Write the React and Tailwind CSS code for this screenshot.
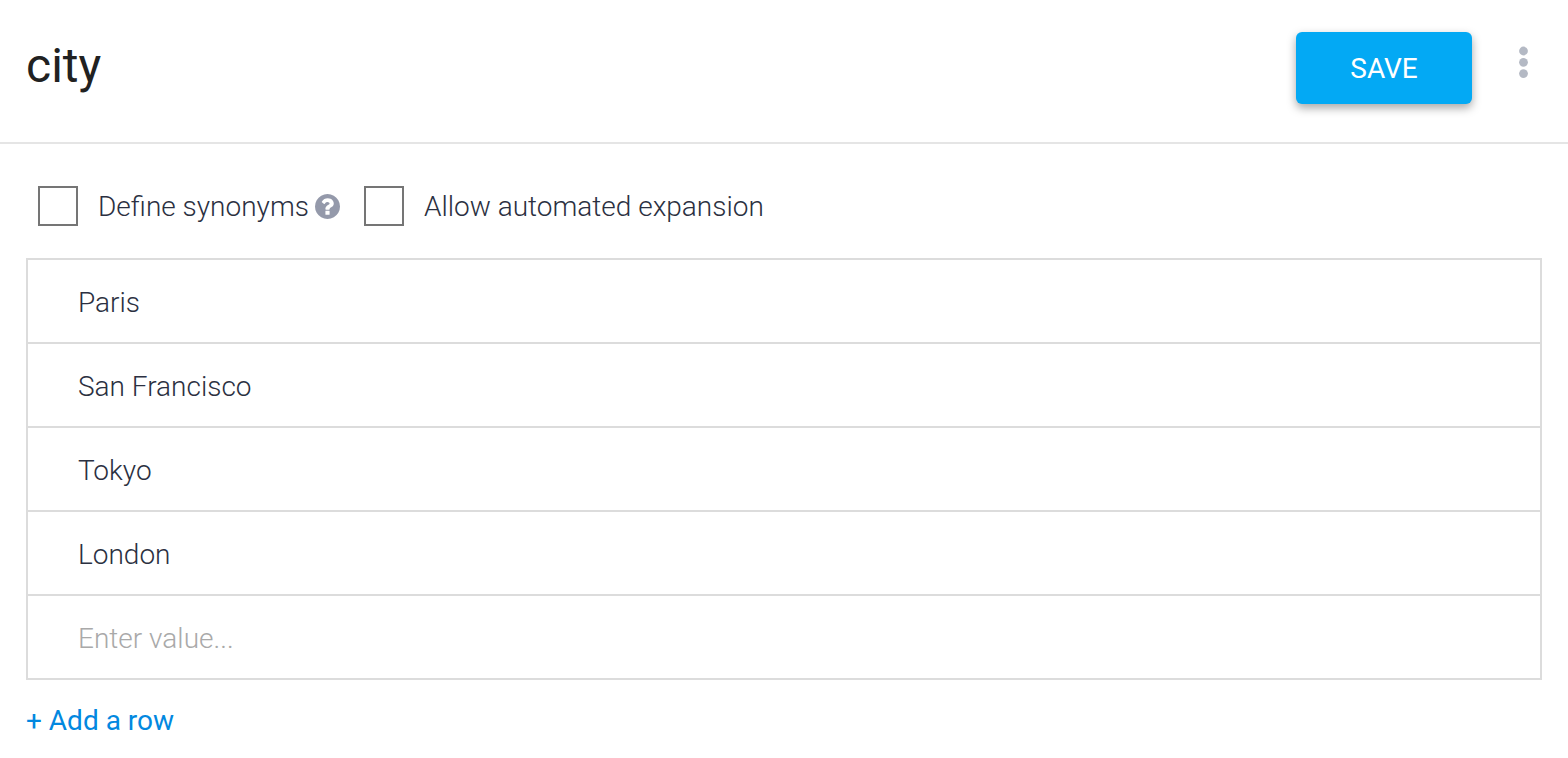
import { useState } from 'react'

const initialRows = ['Paris', 'San Francisco', 'Tokyo', 'London', '']

export default function App() {
  const [name, setName] = useState('city')
  const [rows, setRows] = useState(initialRows)
  const [synonyms, setSynonyms] = useState(false)
  const [expansion, setExpansion] = useState(false)

  const updateRow = (idx, value) => {
    setRows(rows.map((row, i) => (i === idx ? value : row)))
  }

  const boxStyle = "size-10 shrink-0 appearance-none border-2 border-[#757575] bg-white checked:bg-[#03a9f4]"

  return (
    <div className="min-h-screen bg-white font-['Roboto',sans-serif] text-[28px] leading-8 font-light text-[#2b3041] antialiased">
      {/* Header */}
      <header className="flex items-start border-b-2 border-[#e5e5e5] pt-8 pr-6 pb-[38px] pl-[26px]">
        <input
          type="text"
          aria-label="Entity name"
          value={name}
          onChange={(e) => setName(e.target.value)}
          className="h-[66px] min-w-0 flex-1 text-5xl font-normal text-[#212121] outline-none"
        />
        <button className="h-[72px] w-44 rounded-md bg-[#03a9f4] pt-0.5 font-normal text-white shadow-[0_4px_10px_rgba(0,0,0,0.35)]">
          SAVE
        </button>
        <button aria-label="More options" className="mt-2.5 ml-10 p-1 text-[#b4b9c4]">
          <svg width="24" height="36" viewBox="0 0 24 36" fill="currentColor">
            <circle cx="7.5" cy="5" r="4.4" />
            <circle cx="7.5" cy="16.3" r="4.4" />
            <circle cx="7.5" cy="27.6" r="4.4" />
          </svg>
        </button>
      </header>

      <main className="px-[26px]">
        {/* Options */}
        <div className="flex items-center pt-[42px] pb-8 pl-3">
          <label className="flex items-center gap-5">
            <input type="checkbox" checked={synonyms} onChange={(e) => setSynonyms(e.target.checked)} className={boxStyle} />
            <span className="pt-0.5">Define synonyms</span>
          </label>
          <button aria-label="About synonyms" className="mr-6 ml-1.5">
            <svg width="25" height="25" viewBox="0 128 1536 1536" fill="#9499aa">
              <path d="M896 1376v-192q0-14-9-23t-23-9h-192q-14 0-23 9t-9 23v192q0 14 9 23t23 9h192q14 0 23-9t9-23zm256-672q0-88-55.5-163t-138.5-116-170-41q-243 0-371 213-15 24 8 42l132 100q7 6 19 6 16 0 25-12 53-68 86-92 34-24 86-24 48 0 85.5 26t37.5 59q0 38-20 61t-68 45q-63 28-115.5 86.5t-52.5 125.5v36q0 14 9 23t23 9h192q14 0 23-9t9-23q0-19 21.5-49.5t54.5-49.5q32-18 49-28.5t46-35 44.5-48 28-60.5 12.5-81zm384 192q0 209-103 385.5t-279.5 279.5-385.5 103-385.5-103-279.5-279.5-103-385.5 103-385.5 279.5-279.5 385.5-103 385.5 103 279.5 279.5 103 385.5z" />
            </svg>
          </button>
          <label className="flex items-center gap-5">
            <input type="checkbox" checked={expansion} onChange={(e) => setExpansion(e.target.checked)} className={boxStyle} />
            <span className="pt-0.5">Allow automated expansion</span>
          </label>
        </div>

        {/* Entries */}
        <div className="divide-y-2 divide-[#dcdcdc] border-2 border-[#dcdcdc]">
          {rows.map((row, idx) => (
            <div key={idx}>
              <input
                type="text"
                aria-label={`Value ${idx + 1}`}
                placeholder="Enter value..."
                value={row}
                onChange={(e) => updateRow(idx, e.target.value)}
                className="block h-[82px] w-full px-[50px] pt-0.5 outline-none placeholder:text-[#a9a9a9]"
              />
            </div>
          ))}
        </div>

        <button onClick={() => setRows([...rows, ''])} className="mt-6 pt-px font-normal text-[#0288e0]">
          + Add a row
        </button>
      </main>
    </div>
  )
}
